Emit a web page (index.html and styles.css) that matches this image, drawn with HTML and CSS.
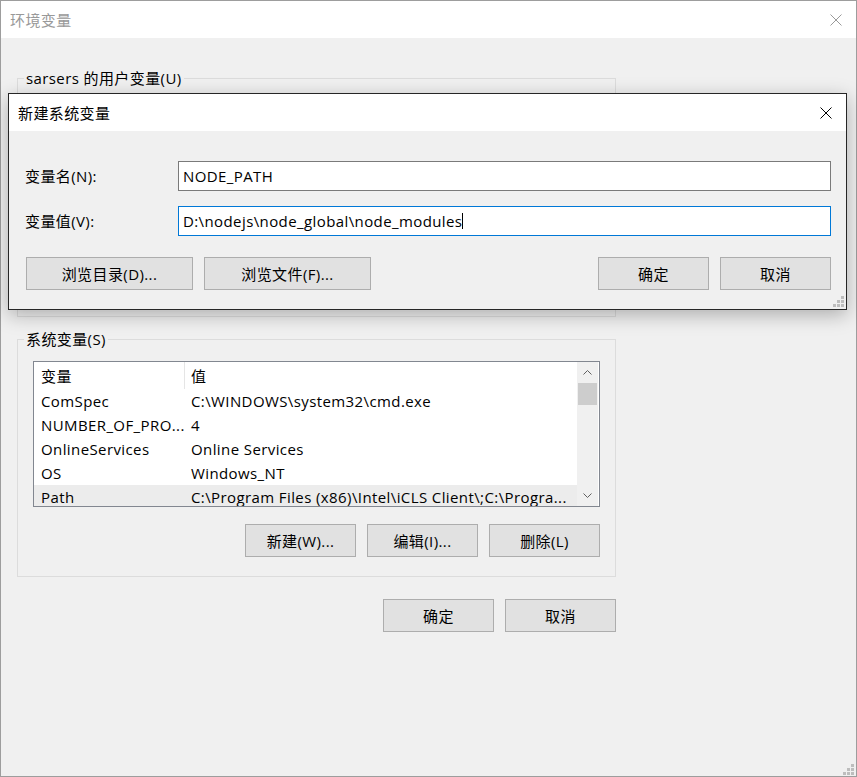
FILE: index.html
```html
<!DOCTYPE html>
<html lang="zh-CN">
<head>
<meta charset="utf-8">
<title>环境变量</title>
<link rel="stylesheet" href="styles.css">
</head>
<body>
<div class="window">
  <div class="titlebar">
    <span class="title inactive">环境变量</span>
    <svg class="close-icon" width="12" height="12" viewBox="0 0 12 12"><path d="M0.5 0.5 L11.5 11.5 M11.5 0.5 L0.5 11.5" stroke="#9a9a9a" stroke-width="1" fill="none"/></svg>
  </div>
  <div class="content">
    <div class="column">
      <fieldset class="group">
        <legend>sarsers 的用户变量(U)</legend>
        <div class="user-body"></div>
      </fieldset>
      <fieldset class="group group-gap">
        <legend>系统变量(S)</legend>
        <div class="group-body">
          <div class="list">
            <div class="list-main">
              <div class="row head"><div class="c1">变量</div><div class="c2">值</div></div>
              <div class="row"><div class="c1">ComSpec</div><div class="c2">C:\WINDOWS\system32\cmd.exe</div></div>
              <div class="row"><div class="c1">NUMBER_OF_PRO...</div><div class="c2">4</div></div>
              <div class="row"><div class="c1">OnlineServices</div><div class="c2">Online Services</div></div>
              <div class="row"><div class="c1">OS</div><div class="c2">Windows_NT</div></div>
              <div class="row hl"><div class="c1">Path</div><div class="c2">C:\Program Files (x86)\Intel\iCLS Client\;C:\Progra...</div></div>
            </div>
            <div class="scrollbar">
              <div class="sb-btn"><svg width="9" height="5" viewBox="0 0 9 5"><polyline points="0.5,4.5 4.5,0.5 8.5,4.5" stroke="#606060" stroke-width="1" fill="none"/></svg></div>
              <div class="sb-thumb"></div>
              <div class="sb-track"></div>
              <div class="sb-btn"><svg width="9" height="5" viewBox="0 0 9 5"><polyline points="0.5,0.5 4.5,4.5 8.5,0.5" stroke="#606060" stroke-width="1" fill="none"/></svg></div>
            </div>
          </div>
          <div class="btnrow">
            <button class="btn">新建(W)...</button>
            <button class="btn">编辑(I)...</button>
            <button class="btn">删除(L)</button>
          </div>
        </div>
      </fieldset>
      <div class="btnrow bottom">
        <button class="btn">确定</button>
        <button class="btn">取消</button>
      </div>
    </div>
  </div>
  <svg class="grip main-grip" width="11" height="11" viewBox="0 0 11 11"><g fill="#bdbdbd"><rect x="8" y="0" width="3" height="3"/><rect x="4" y="4" width="3" height="3"/><rect x="8" y="4" width="3" height="3"/><rect x="0" y="8" width="3" height="3"/><rect x="4" y="8" width="3" height="3"/><rect x="8" y="8" width="3" height="3"/></g></svg>

  <div class="dialog">
    <div class="titlebar dlg-title">
      <span class="title">新建系统变量</span>
      <svg class="close-icon dlg-close" width="12" height="12" viewBox="0 0 12 12"><path d="M0.5 0.5 L11.5 11.5 M11.5 0.5 L0.5 11.5" stroke="#000" stroke-width="1" fill="none"/></svg>
    </div>
    <div class="dlg-body">
      <div class="form">
        <div class="label">变量名(N):</div>
        <div class="field">NODE_PATH</div>
        <div class="label">变量值(V):</div>
        <div class="field focused">D:\nodejs\node_global\node_modules<span class="caret"></span></div>
      </div>
      <div class="dlg-buttons">
        <div class="btn-group">
          <button class="btn wide">浏览目录(D)...</button>
          <button class="btn wide">浏览文件(F)...</button>
        </div>
        <div class="btn-group">
          <button class="btn">确定</button>
          <button class="btn">取消</button>
        </div>
      </div>
    </div>
    <svg class="grip dlg-grip" width="11" height="11" viewBox="0 0 11 11"><g fill="#bdbdbd"><rect x="8" y="0" width="3" height="3"/><rect x="4" y="4" width="3" height="3"/><rect x="8" y="4" width="3" height="3"/><rect x="0" y="8" width="3" height="3"/><rect x="4" y="8" width="3" height="3"/><rect x="8" y="8" width="3" height="3"/></g></svg>
  </div>
</div>
</body>
</html>
```
FILE: styles.css
```css
* { box-sizing: border-box; }
html, body { margin: 0; padding: 0; }
body {
  font-family: "Open Sans", "Noto Sans CJK SC", sans-serif;
  font-size: 15px;
  letter-spacing: 0.4px;
  color: #000;
  background: #f0f0f0;
}
.window {
  position: relative;
  width: 857px;
  height: 777px;
  border: 1px solid #9d9d9d;
  background: #f0f0f0;
  display: flex;
  flex-direction: column;
}
.titlebar {
  height: 37px;
  background: #fff;
  display: flex;
  align-items: center;
  justify-content: space-between;
  padding-left: 9px;
  flex: none;
}
.title { line-height: 20px; }
.inactive { color: #999; }
.close-icon { margin-right: 14px; display: block; }
.content {
  flex: 1;
  padding: 30px 0 0 16px;
}
.column { width: 599px; }
.group {
  margin: 0;
  padding: 0;
  border: 1px solid #dcdcdc;
  min-width: 0;
}
.group legend {
  margin-left: 6px;
  padding: 0 2px;
  line-height: 20px;
}
.group-gap { margin-top: 12px; }
.user-body { height: 228px; }
.group-body { padding: 12px 15px 19px; }
.list {
  height: 146px;
  border: 1px solid #828790;
  background: #fff;
  display: flex;
  overflow: hidden;
}
.list-main { flex: 1; min-width: 0; overflow: hidden; }
.row {
  display: flex;
  height: 24px;
  align-items: center;
  white-space: nowrap;
  line-height: 20px;
}
.row.head { height: 27px; align-items: stretch; }
.row.head > div { display: flex; align-items: center; }
.row.hl { background: #ececec; }
.c1 {
  width: 151px;
  flex: none;
  padding-left: 7px;
  border-right: 1px solid transparent;
  overflow: hidden;
}
.head .c1 { border-right-color: #e5e5e5; }
.c2 { padding-left: 6px; overflow: hidden; }
.scrollbar {
  width: 21px;
  margin-right: 1px;
  background: #f0f0f0;
  display: flex;
  flex-direction: column;
  flex: none;
}
.sb-btn {
  height: 21px;
  display: flex;
  align-items: center;
  justify-content: center;
  flex: none;
}
.sb-btn svg { display: block; }
.sb-thumb {
  height: 22px;
  margin: 0 1px;
  background: #cdcdcd;
  flex: none;
}
.sb-track { flex: 1; }
.btnrow {
  display: flex;
  justify-content: flex-end;
  gap: 11px;
  margin-top: 17px;
}
.btnrow.bottom { margin-top: 22px; }
.btn {
  width: 111px;
  height: 33px;
  padding: 0;
  border: 1px solid #adadad;
  background: #e1e1e1;
  font: inherit;
  letter-spacing: inherit;
  color: #000;
  line-height: 20px;
}
.btn.wide { width: 167px; }
.grip { position: absolute; display: block; }
.main-grip { right: 2px; bottom: 1px; }

.dialog {
  position: absolute;
  left: 7px;
  top: 92px;
  width: 839px;
  height: 217px;
  border: 1px solid #262626;
  background: #f0f0f0;
  box-shadow: 0 5px 18px rgba(0, 0, 0, 0.28);
  display: flex;
  flex-direction: column;
}
.dlg-title { padding-left: 9px; }
.dlg-body { padding: 30px 15px 19px 16px; }
.form {
  display: grid;
  grid-template-columns: 153px 1fr;
  grid-auto-rows: 30px;
  row-gap: 15px;
}
.label {
  display: flex;
  align-items: center;
  line-height: 20px;
}
.field {
  border: 1px solid #7a7a7a;
  background: #fff;
  padding-left: 4px;
  display: flex;
  align-items: center;
  line-height: 20px;
  white-space: nowrap;
}
.field.focused { border-color: #0078d7; }
.caret {
  display: inline-block;
  width: 1px;
  height: 16px;
  background: #000;
}
.dlg-buttons {
  display: flex;
  justify-content: space-between;
  margin-top: 21px;
  padding-left: 1px;
}
.btn-group { display: flex; gap: 11px; }
.dlg-grip { right: 2px; bottom: 2px; }
```
